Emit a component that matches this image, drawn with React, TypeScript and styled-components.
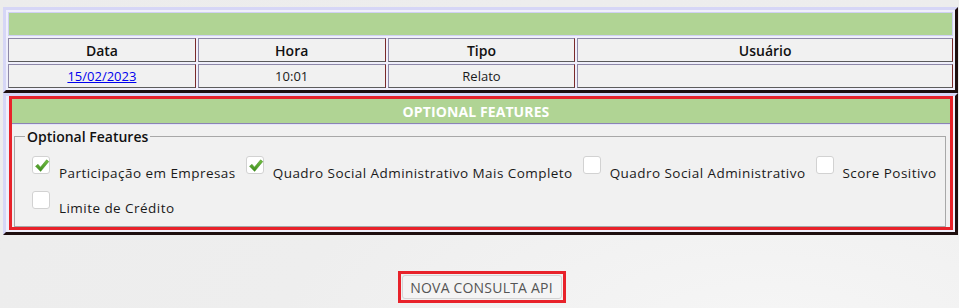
import React from 'react';
import styled, { createGlobalStyle } from 'styled-components';

const Global = createGlobalStyle`
  html, body { margin: 0; padding: 0; background: #eeeeee; }
  body { font-family: 'Open Sans', 'Liberation Sans', sans-serif; color: #1a1a1a; }
`;

const Page = styled.div`
  width: 959px;
  height: 308px;
  box-sizing: border-box;
  padding: 7px 1px 0 3px;
  display: flex;
  flex-direction: column;
  background: radial-gradient(ellipse at 80% 110%, #f6f6f6 0%, #eeeeee 45%, #ececec 100%);
  overflow: hidden;
`;

const frame = `
  box-sizing: border-box;
  width: 955px;
  border: 3px solid;
  border-color: #d6d6f6 #1e0e0e #1e0e0e #d6d6f6;
  background: #efeffb;
`;

const HistoryTable = styled.table`
  ${frame}
  border-collapse: separate;
  border-spacing: 2px;
  table-layout: fixed;
`;

const BannerCell = styled.td`
  height: 24px;
  box-sizing: border-box;
  padding: 0;
  background: #b0d494;
  border: 1px solid #d0d0f4;
`;

const HeadCell = styled.th`
  height: 24px;
  box-sizing: border-box;
  padding: 0;
  background: #f1f1f1;
  border: 1px solid;
  border-color: #8e88a8 #7a2a2a #5c5c5c #8e88a8;
  font-size: 14px;
  font-weight: 600;
  color: #111;
  text-align: center;
  vertical-align: middle;
`;

const DataCell = styled.td`
  height: 24px;
  box-sizing: border-box;
  padding: 0;
  background: #f1f1f1;
  border: 1px solid;
  border-color: #8e88a8 #7a2a2a #5c5c5c #8e88a8;
  font-size: 13px;
  color: #1a1a1a;
  text-align: center;
  vertical-align: middle;
`;

const DateLink = styled.a`
  color: #0000ee;
  text-decoration: underline;
`;

const FeaturesFrame = styled.div`
  ${frame}
  padding: 0 2px 2px 3px;
`;

const Highlight = styled.div`
  border: 3px solid #e8222a;
  background: #f1f1f1;
  display: flex;
  flex-direction: column;
`;

const TitleBar = styled.div`
  height: 24px;
  background: #b0d494;
  border-bottom: 1px solid #8c84b4;
  box-shadow: 0 1px 0 #e4e4fa;
  display: flex;
  align-items: center;
  justify-content: center;
  padding-right: 10px;
  color: #ffffff;
  font-size: 14px;
  font-weight: 700;
  letter-spacing: 0.1px;
`;

const Group = styled.fieldset`
  margin: 4px 4px 0 2px;
  padding: 11px 0 10px 10px;
  border: 1px solid #a8a8a8;
  min-width: 0;
`;

const Legend = styled.legend`
  padding: 0 2px;
  font-size: 14px;
  font-weight: 600;
  line-height: 17px;
  color: #111;
`;

const Options = styled.div`
  display: flex;
  flex-wrap: wrap;
  row-gap: 10px;
  column-gap: 10px;
  padding-left: 7px;
`;

const Option = styled.label`
  display: flex;
  align-items: flex-start;
  height: 25px;
`;

const Box = styled.span`
  position: relative;
  width: 18px;
  height: 18px;
  box-sizing: border-box;
  border: 1px solid #d2d2d2;
  border-radius: 3px;
  background: #ffffff;
  flex: none;
`;

const Tick = styled.svg`
  position: absolute;
  left: 1px;
  top: 1px;
`;

const OptionText = styled.span`
  margin-left: 9px;
  margin-top: 9px;
  font-size: 13.5px;
  line-height: 16px;
  letter-spacing: 0.45px;
  color: #1a1a1a;
  white-space: nowrap;
`;

const ButtonRow = styled.div`
  margin-top: 36px;
  display: flex;
  justify-content: center;
  padding-left: 2px;
`;

const ButtonOutline = styled.div`
  border: 3px solid #e8222a;
  padding: 1px;
  display: flex;
`;

const Button = styled.button`
  width: 160px;
  height: 24px;
  box-sizing: border-box;
  padding: 0;
  border: 1px solid #d4d4d4;
  border-radius: 3px;
  background: #f4f4f4;
  color: #555555;
  font-family: 'Open Sans', 'Liberation Sans', sans-serif;
  font-size: 14px;
  font-weight: 500;
  letter-spacing: 0.2px;
  cursor: pointer;
`;

type Feature = { label: string; checked: boolean };

const features: Feature[] = [
  { label: 'Participação em Empresas', checked: true },
  { label: 'Quadro Social Administrativo Mais Completo', checked: true },
  { label: 'Quadro Social Administrativo', checked: false },
  { label: 'Score Positivo', checked: false },
  { label: 'Limite de Crédito', checked: false },
];

const CheckMark = () => (
  <Tick width="16" height="16" viewBox="0 0 16 16">
    <defs>
      <linearGradient id="tickGrad" x1="0" y1="0" x2="0" y2="1">
        <stop offset="0" stopColor="#74c043" />
        <stop offset="1" stopColor="#3e8c1c" />
      </linearGradient>
    </defs>
    <path
      d="M1.5 8.2 L4 6.3 L6.4 9.2 L12.6 1.8 L14.8 3.6 L6.6 13.4 Z"
      fill="url(#tickGrad)"
      stroke="#3f8a1f"
      strokeWidth="0.5"
      strokeLinejoin="round"
    />
  </Tick>
);

export default function App() {
  return (
    <>
      <Global />
      <Page>
        <HistoryTable>
          <colgroup>
            <col style={{ width: '20%' }} />
            <col style={{ width: '20%' }} />
            <col style={{ width: '20%' }} />
            <col style={{ width: '40%' }} />
          </colgroup>
          <tbody>
            <tr>
              <BannerCell colSpan={4} />
            </tr>
            <tr>
              <HeadCell>Data</HeadCell>
              <HeadCell>Hora</HeadCell>
              <HeadCell>Tipo</HeadCell>
              <HeadCell>Usuário</HeadCell>
            </tr>
            <tr>
              <DataCell>
                <DateLink href="#">15/02/2023</DateLink>
              </DataCell>
              <DataCell>10:01</DataCell>
              <DataCell>Relato</DataCell>
              <DataCell />
            </tr>
          </tbody>
        </HistoryTable>
        <FeaturesFrame>
          <Highlight>
            <TitleBar>OPTIONAL FEATURES</TitleBar>
            <Group>
              <Legend>Optional Features</Legend>
              <Options>
                {features.map((f) => (
                  <Option key={f.label}>
                    <Box>{f.checked && <CheckMark />}</Box>
                    <OptionText>{f.label}</OptionText>
                  </Option>
                ))}
              </Options>
            </Group>
          </Highlight>
        </FeaturesFrame>
        <ButtonRow>
          <ButtonOutline>
            <Button type="button">NOVA CONSULTA API</Button>
          </ButtonOutline>
        </ButtonRow>
      </Page>
    </>
  );
}
